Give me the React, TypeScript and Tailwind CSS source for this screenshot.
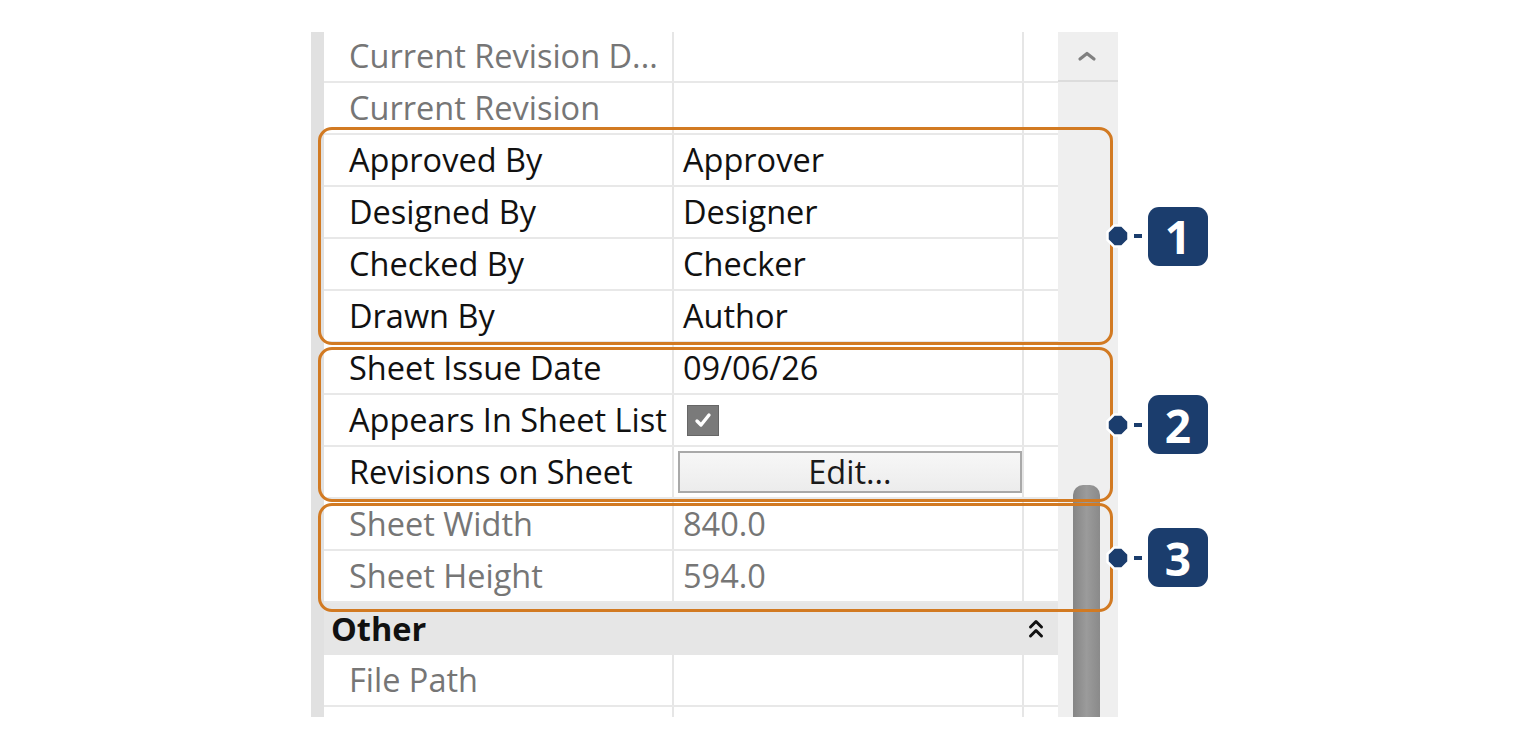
import React from "react";

type Row = {
  label: string;
  value?: React.ReactNode;
  muted?: boolean;
};

const rows: Row[] = [
  { label: "Current Revision D...", muted: true },
  { label: "Current Revision", muted: true },
  { label: "Approved By", value: "Approver" },
  { label: "Designed By", value: "Designer" },
  { label: "Checked By", value: "Checker" },
  { label: "Drawn By", value: "Author" },
  { label: "Sheet Issue Date", value: "09/06/26" },
  { label: "Appears In Sheet List", value: "checkbox" },
  { label: "Revisions on Sheet", value: "button" },
  { label: "Sheet Width", value: "840.0", muted: true },
  { label: "Sheet Height", value: "594.0", muted: true },
];

function CheckBox() {
  return (
    <div className="ml-[4px] flex h-[31px] w-[32px] items-center justify-center border border-[#666666] bg-[#7a7a7a]">
      <svg width="20" height="18" viewBox="0 0 20 18">
        <path d="M4 10 L8 14 L16 4" fill="none" stroke="#ffffff" strokeWidth="3.4" strokeLinecap="round" strokeLinejoin="round" />
      </svg>
    </div>
  );
}

function EditButton() {
  return (
    <div className="flex h-[42px] w-full items-center justify-center border-2 border-[#a9a9a9] bg-gradient-to-b from-[#f7f7f7] to-[#ececec] text-[#1a1a1a]">
      Edit...
    </div>
  );
}

function ValueCell({ row }: { row: Row }) {
  if (row.value === "checkbox") {
    return (
      <div className="flex h-full items-center border-r-2 border-[#e6e6e6] pl-[9px]">
        <CheckBox />
      </div>
    );
  }
  if (row.value === "button") {
    return (
      <div className="flex h-full items-center border-r-2 border-[#e6e6e6] pl-[4px] pr-0">
        <EditButton />
      </div>
    );
  }
  return (
    <div
      className={
        "flex h-full items-center border-r-2 border-[#e6e6e6] pl-[9px] " +
        (row.muted ? "text-[#767676]" : "text-[#111111]")
      }
    >
      {row.value}
    </div>
  );
}

function PropertyRow({ row }: { row: Row }) {
  return (
    <div className="grid h-[52px] shrink-0 grid-cols-[350px_350px_34px] border-b-2 border-[#e8e8e8]">
      <div
        className={
          "flex h-full items-center border-r-2 border-[#e6e6e6] pl-[25px] whitespace-nowrap " +
          (row.muted ? "text-[#767676]" : "text-[#111111]")
        }
      >
        {row.label}
      </div>
      <ValueCell row={row} />
      <div className="h-full" />
    </div>
  );
}

function GroupHeader({ title }: { title: string }) {
  return (
    <div className="flex h-[52px] shrink-0 items-center justify-between bg-[#e6e6e6] pl-[7px] pr-[14px]">
      <span className="font-bold text-[#111111]">{title}</span>
      <svg width="16" height="26" viewBox="0 0 16 26">
        <path d="M2.5 11 L8 5.5 L13.5 11" fill="none" stroke="#111111" strokeWidth="3" strokeLinecap="round" strokeLinejoin="round" />
        <path d="M2.5 20 L8 14.5 L13.5 20" fill="none" stroke="#111111" strokeWidth="3" strokeLinecap="round" strokeLinejoin="round" />
      </svg>
    </div>
  );
}

function ScrollBar() {
  return (
    <div className="flex h-full w-[60px] flex-col bg-[#efefef]">
      <div className="flex h-[50px] shrink-0 items-center justify-center border-b-2 border-[#dcdcdc] pr-[2px]">
        <svg width="20" height="12" viewBox="0 0 20 12">
          <path d="M3 9 L10 3.5 L17 9" fill="none" stroke="#808080" strokeWidth="3.2" strokeLinecap="round" strokeLinejoin="round" />
        </svg>
      </div>
      <div className="flex flex-1 flex-col pl-[15px] pt-[403px]">
        <div className="w-[27px] flex-1 rounded-t-[10px] bg-gradient-to-r from-[#858585] via-[#9b9b9b] to-[#8a8a8a]" />
      </div>
    </div>
  );
}

function Callout({ top, height, n }: { top: string; height: string; n: number }) {
  return (
    <div className={"absolute left-[318px] w-[900px] " + top + " " + height}>
      <div className="absolute inset-y-0 left-0 w-[795px] rounded-[14px] border-[3px] border-[#d27a22]" />
      <div className="absolute inset-y-0 left-[788px] flex items-center">
        <svg width="24" height="24" viewBox="0 0 24 24">
          <polygon
            points="8,1.5 16,1.5 22.5,8 22.5,16 16,22.5 8,22.5 1.5,16 1.5,8"
            fill="#1b3d6d"
            stroke="#ffffff"
            strokeWidth="2.5"
          />
        </svg>
        <div className="ml-[4px] h-[4px] w-[8px] bg-[#1b3d6d]" />
        <div className="ml-[6px] flex h-[59px] w-[60px] items-center justify-center rounded-[11px] bg-[#1b3d6d] font-['Open_Sans',sans-serif] text-[46px] font-bold leading-none text-white">
          {n}
        </div>
      </div>
    </div>
  );
}

export default function App() {
  return (
    <div className="relative h-[750px] w-[1520px] overflow-hidden bg-white font-['Open_Sans','Noto_Sans',sans-serif] text-[32.5px]">
      <div className="pl-[311px] pt-[32px]">
        <div className="flex h-[685px] w-[807px] overflow-hidden">
          <div className="h-full w-[13px] shrink-0 bg-[#e1e1e1]" />
          <div className="-mt-px flex w-[734px] shrink-0 flex-col">
            {rows.map((r) => (
              <PropertyRow key={r.label} row={r} />
            ))}
            <GroupHeader title="Other" />
            <PropertyRow row={{ label: "File Path", muted: true }} />
            <PropertyRow row={{ label: "", muted: true }} />
          </div>
          <ScrollBar />
        </div>
      </div>

      <Callout top="top-[127px]" height="h-[218px]" n={1} />
      <Callout top="top-[347px]" height="h-[155px]" n={2} />
      <Callout top="top-[503px]" height="h-[109px]" n={3} />
    </div>
  );
}
